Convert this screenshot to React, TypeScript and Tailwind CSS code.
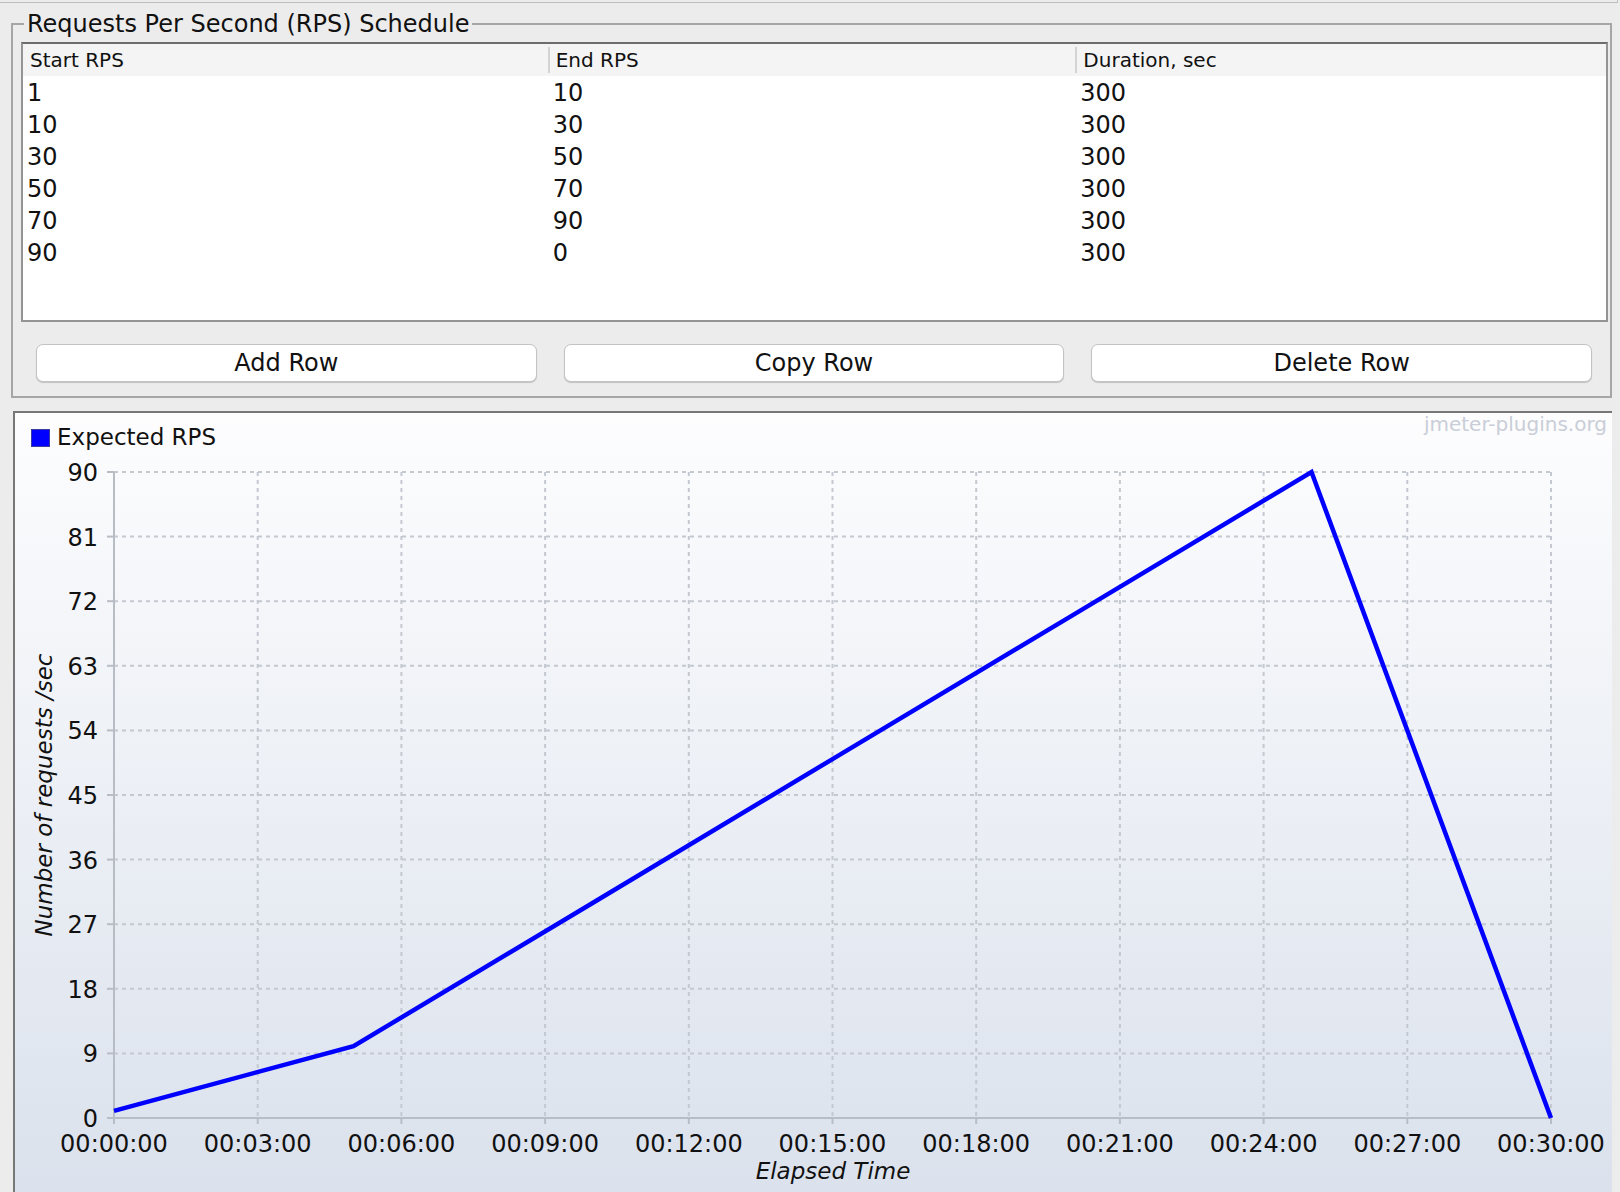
import React from 'react'

const rows = [
  ['1', '10', '300'],
  ['10', '30', '300'],
  ['30', '50', '300'],
  ['50', '70', '300'],
  ['70', '90', '300'],
  ['90', '0', '300'],
]

// schedule points: minutes -> rps
const points: [number, number][] = [
  [0, 1],
  [5, 10],
  [10, 30],
  [15, 50],
  [20, 70],
  [25, 90],
  [30, 0],
]

const PL = 99
const PR = 1536
const PT = 10
const PB = 656

const xOf = (min: number) => PL + (min / 30) * (PR - PL)
const yOf = (v: number) => PB - (v / 90) * (PB - PT)

const yTicks = [0, 9, 18, 27, 36, 45, 54, 63, 72, 81, 90]
const xTicks = [0, 3, 6, 9, 12, 15, 18, 21, 24, 27, 30]

const fmt = (min: number) => `00:${String(min).padStart(2, '0')}:00`

function ScheduleChart() {
  const path = points.map(([t, v], i) => `${i === 0 ? 'M' : 'L'}${xOf(t).toFixed(1)} ${yOf(v).toFixed(1)}`).join(' ')
  return (
    <svg width={1597} height={740} className="block overflow-visible" fontFamily="'DejaVu Sans', sans-serif">
      {yTicks.map((v) =>
        v === 0 ? null : (
          <line key={'h' + v} x1={PL} x2={PR} y1={yOf(v)} y2={yOf(v)} stroke="#c4c8d0" strokeWidth={2} strokeDasharray="4 4" />
        ),
      )}
      {xTicks.map((m) =>
        m === 0 ? null : (
          <line key={'v' + m} x1={xOf(m)} x2={xOf(m)} y1={PT} y2={PB} stroke="#c4c8d0" strokeWidth={2} strokeDasharray="4 4" />
        ),
      )}
      {/* axes */}
      <line x1={PL} x2={PL} y1={PT} y2={PB + 1} stroke="#b8bcc5" strokeWidth={2} />
      <line x1={PL} x2={PR} y1={PB} y2={PB} stroke="#b8bcc5" strokeWidth={2} />
      {yTicks.map((v) => (
        <line key={'yt' + v} x1={PL - 7} x2={PL} y1={yOf(v)} y2={yOf(v)} stroke="#b8bcc5" strokeWidth={2} />
      ))}
      {xTicks.map((m) => (
        <line key={'xt' + m} x1={xOf(m)} x2={xOf(m)} y1={PB} y2={PB + 6} stroke="#b8bcc5" strokeWidth={2} />
      ))}
      {yTicks.map((v) => (
        <text key={'yl' + v} x={83} y={yOf(v) + 9} textAnchor="end" fontSize={24} fill="#111">
          {v}
        </text>
      ))}
      {xTicks.map((m) => (
        <text key={'xl' + m} x={xOf(m)} y={690} textAnchor="middle" fontSize={24} fill="#111">
          {fmt(m)}
        </text>
      ))}
      <text x={37} y={333} transform="rotate(-90 37 333)" textAnchor="middle" fontSize={23} fontStyle="italic" fill="#111">
        Number of requests /sec
      </text>
      <text x={818} y={717} textAnchor="middle" fontSize={23} fontStyle="italic" fill="#111">
        Elapsed Time
      </text>
      <path d={path} fill="none" stroke="#0000ff" strokeWidth={4.5} />
    </svg>
  )
}

export default function App() {
  return (
    <div className="relative h-[1192px] w-[1620px] overflow-hidden bg-[#ececec] font-['DejaVu_Sans',sans-serif] text-[#111]">
      <div className="h-[3px] w-[1618px] border-r border-b border-[#bdbdbd]" />

      <fieldset className="mt-[7px] ml-[11px] w-[1601px] border-2 border-[#a6a6a6] pr-[2px] pl-[8px]">
        <legend className="ml-[3px] px-[3px] text-[24px] leading-[28px]">Requests Per Second (RPS) Schedule</legend>
        <div className="pt-[4px]">
          <div className="h-[280px] w-[1587px] border-2 border-[#949494] border-t-[#6c6c6c] bg-white">
            <div className="grid h-[32px] grid-cols-3 bg-[#f4f4f4] text-[20px] leading-[32px]">
              <div className="pl-[7px]">Start RPS</div>
              <div className="relative pl-[5px]">
                <span className="absolute top-[3px] left-[-3px] h-[26px] w-[2px] bg-[#d4d4d4]" />
                End RPS
              </div>
              <div className="relative pl-[5px]">
                <span className="absolute top-[3px] left-[-3px] h-[26px] w-[2px] bg-[#d4d4d4]" />
                Duration, sec
              </div>
            </div>
            <div className="pt-[1px]">
              {rows.map((r, i) => (
                <div key={i} className="grid h-[32px] grid-cols-3 text-[24px] leading-[32px]">
                  <div className="pl-[4px]">{r[0]}</div>
                  <div className="pl-[2px]">{r[1]}</div>
                  <div className="pl-[2px]">{r[2]}</div>
                </div>
              ))}
            </div>
          </div>
          <div className="grid grid-cols-3 gap-[27px] pt-[22px] pr-[16px] pb-[14px] pl-[15px]">
            {['Add Row', 'Copy Row', 'Delete Row'].map((b) => (
              <div
                key={b}
                className="flex h-[38px] items-center justify-center rounded-[7px] border border-[#c3c3c3] bg-white text-[24px] shadow-[0_1px_1px_rgba(0,0,0,0.18)]"
              >
                {b}
              </div>
            ))}
          </div>
        </div>
      </fieldset>

      <div className="relative mt-[13px] ml-[13px] h-[800px] w-[1599px] border-t-2 border-l-2 border-[#777] bg-linear-to-b from-[#fdfdfe] to-[#dae1ec]">
        <div className="absolute top-[-4px] right-[5px] text-[20px] text-[#c9ced8]">jmeter-plugins.org</div>
        <div className="flex h-[49px] items-center gap-[7px] pl-[16px]">
          <span className="h-[18px] w-[19px] border border-[#3a3aa0] bg-[#0000ff]" />
          <span className="text-[23px]">Expected RPS</span>
        </div>
        <ScheduleChart />
      </div>
    </div>
  )
}
